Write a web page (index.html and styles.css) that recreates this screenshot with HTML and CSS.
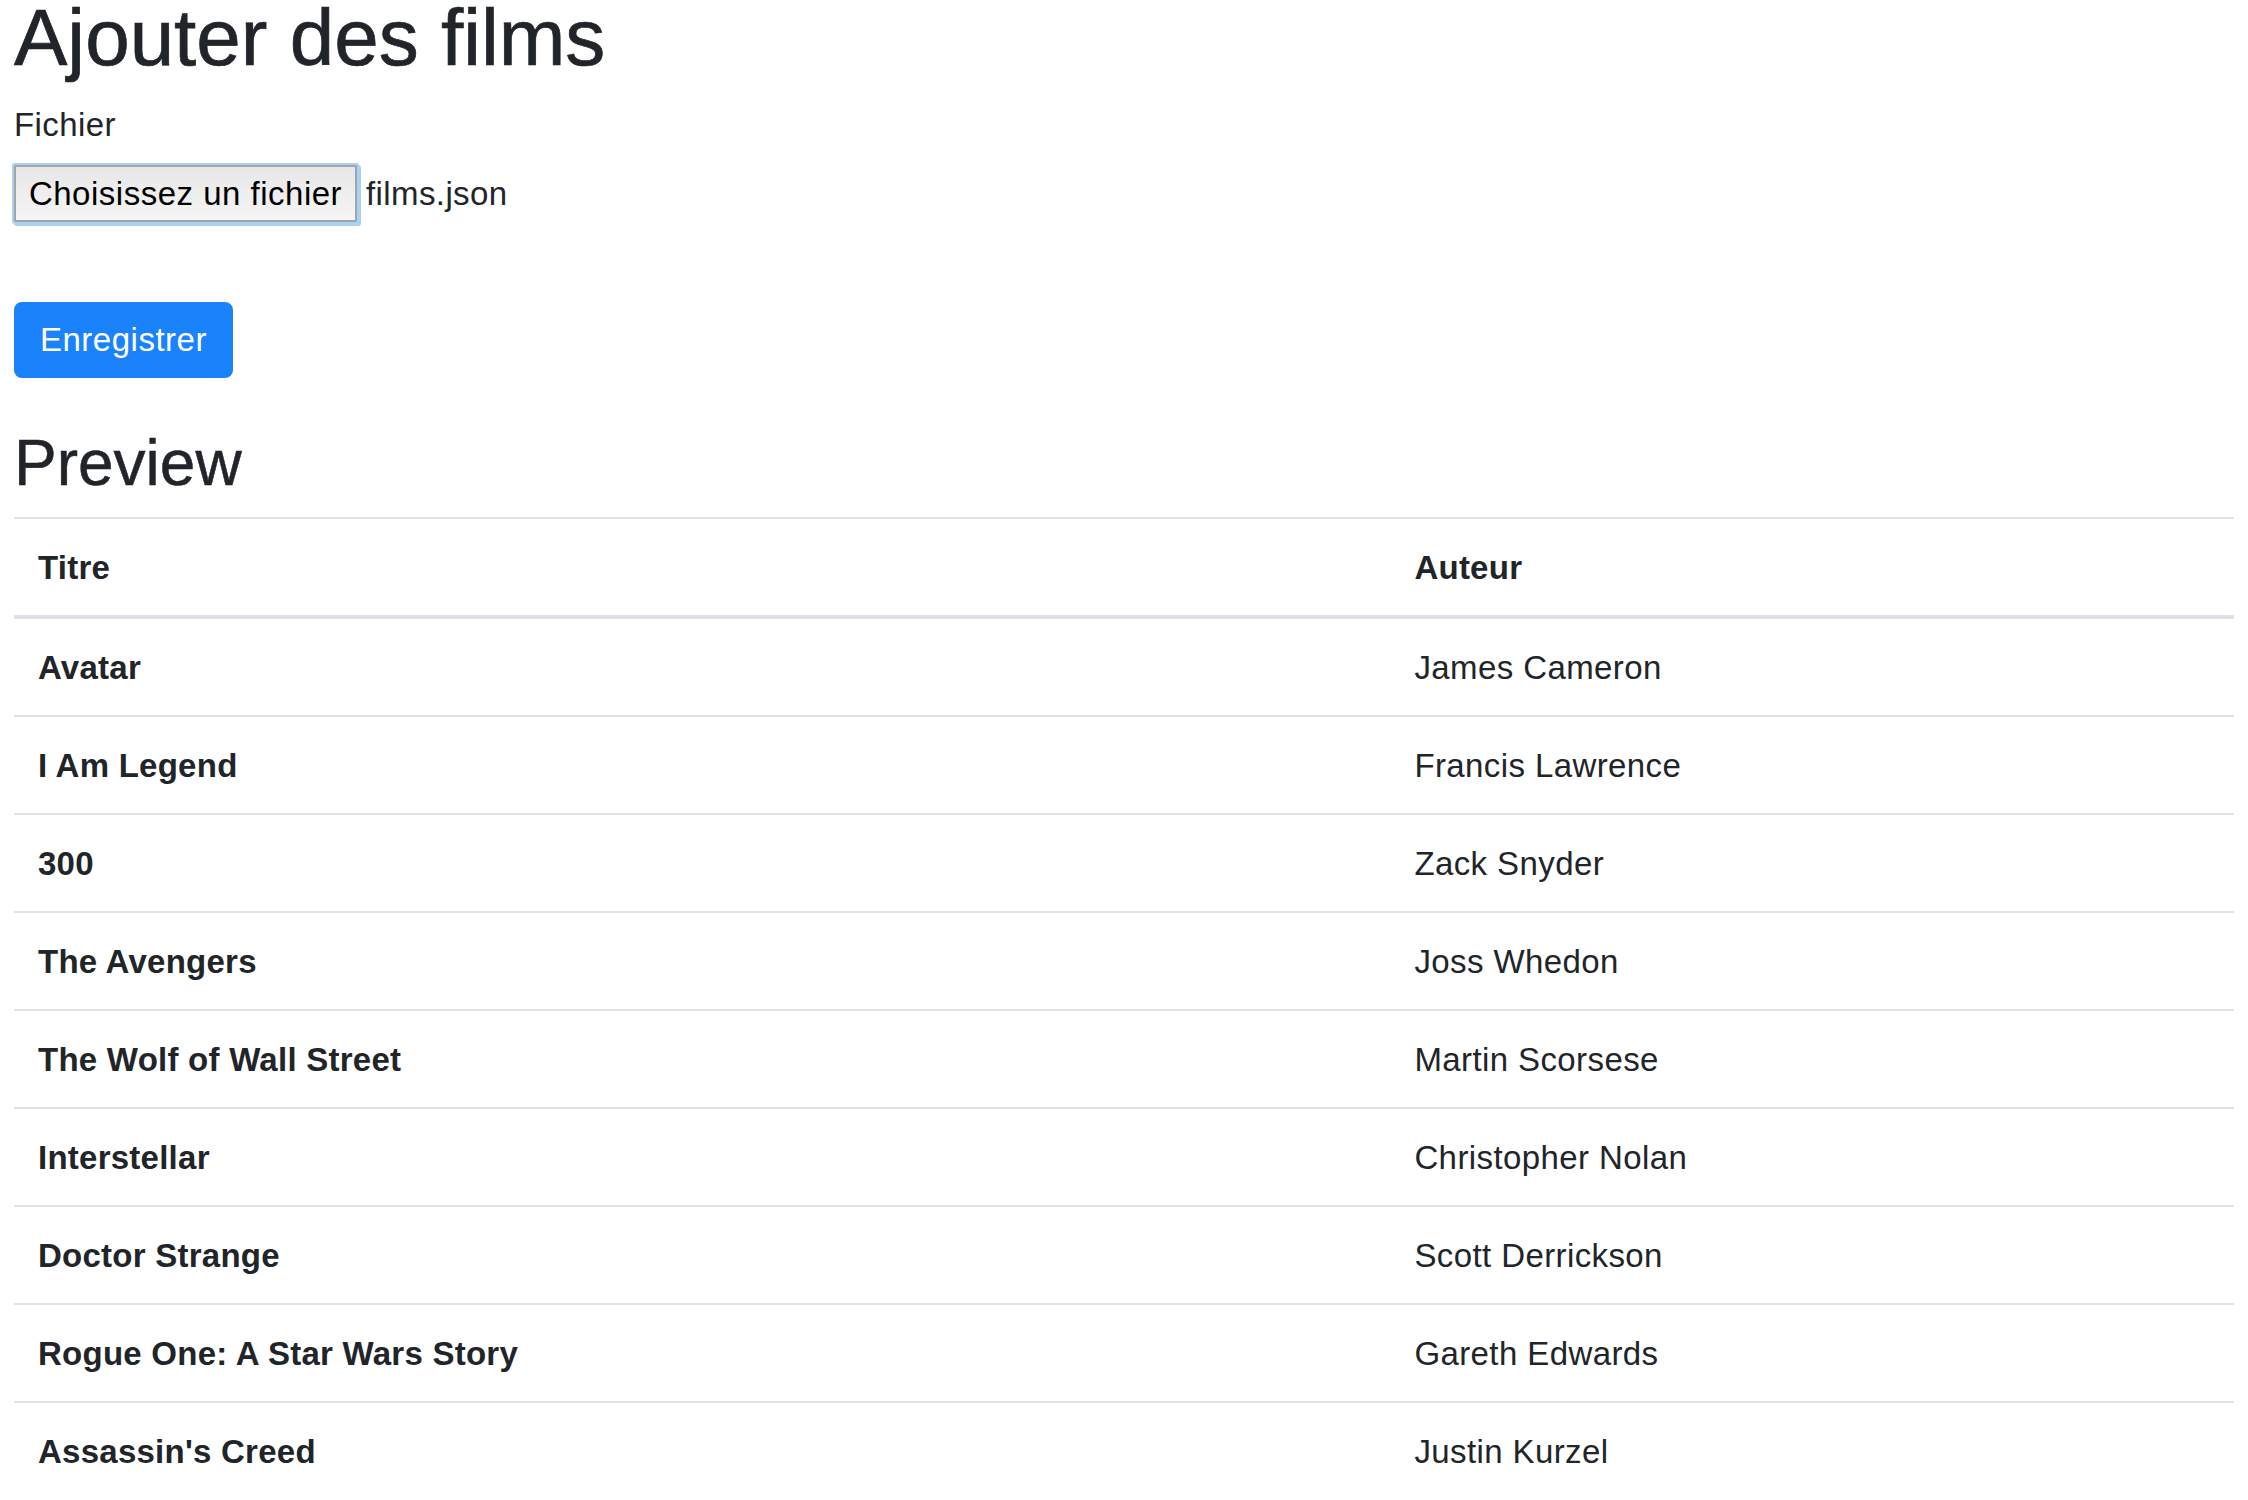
FILE: index.html
```html
<!DOCTYPE html>
<html lang="fr">
<head>
<meta charset="utf-8">
<title>Ajouter des films</title>
<link rel="stylesheet" href="styles.css">
</head>
<body>
<main class="page">
  <h1 class="title">Ajouter des films</h1>
  <form class="upload">
    <label class="field-label" for="file">Fichier</label>
    <div class="file-row">
      <button type="button" id="file" class="file-btn">Choisissez un fichier</button>
      <span class="file-name">films.json</span>
    </div>
    <button type="submit" class="btn-primary">Enregistrer</button>
  </form>
  <h2 class="subtitle">Preview</h2>
  <table class="films">
    <thead>
      <tr><th class="col-title">Titre</th><th>Auteur</th></tr>
    </thead>
    <tbody>
      <tr><th>Avatar</th><td>James Cameron</td></tr>
      <tr><th>I Am Legend</th><td>Francis Lawrence</td></tr>
      <tr><th>300</th><td>Zack Snyder</td></tr>
      <tr><th>The Avengers</th><td>Joss Whedon</td></tr>
      <tr><th>The Wolf of Wall Street</th><td>Martin Scorsese</td></tr>
      <tr><th>Interstellar</th><td>Christopher Nolan</td></tr>
      <tr><th>Doctor Strange</th><td>Scott Derrickson</td></tr>
      <tr><th>Rogue One: A Star Wars Story</th><td>Gareth Edwards</td></tr>
      <tr><th>Assassin's Creed</th><td>Justin Kurzel</td></tr>
    </tbody>
  </table>
</main>
</body>
</html>
```
FILE: styles.css
```css
html, body {
  margin: 0;
  padding: 0;
  background: #ffffff;
}

body {
  font-family: "Liberation Sans", Arial, sans-serif;
  color: #212529;
  font-size: 33px;
  line-height: 48px;
  letter-spacing: 0.4px;
}

.page {
  padding: 0 14px;
}

.title {
  margin: 0;
  font-size: 80px;
  font-weight: 400;
  line-height: 76px;
  letter-spacing: 0;
  color: #212529;
  -webkit-text-stroke: 0.7px #212529;
}

.upload {
  display: flex;
  flex-direction: column;
  align-items: flex-start;
}

.field-label {
  display: block;
  margin-top: 25px;
  font-size: 33px;
  line-height: 48px;
}

.file-row {
  display: flex;
  align-items: center;
  gap: 9px;
  margin-top: 16px;
  height: 57px;
}

.file-btn {
  box-sizing: border-box;
  height: 57px;
  width: 343px;
  padding: 0;
  border: 2px solid #a4a4a4;
  border-radius: 1px;
  background: linear-gradient(#e7e7e7, #f5f5f5);
  box-shadow: 0 0 0 2px #a9d0f5, 2px 2px 0 2px #a9d0f5;
  font-family: "Liberation Sans", Arial, sans-serif;
  font-size: 33px;
  line-height: 40px;
  letter-spacing: 0.5px;
  color: #000000;
  text-align: center;
}

.file-name {
  font-size: 33px;
  line-height: 40px;
  color: #212529;
}

.btn-primary {
  box-sizing: border-box;
  margin-top: 80px;
  height: 76px;
  padding: 12px 24px;
  border: 2px solid #1a82fb;
  border-radius: 8px;
  background: #1a82fb;
  color: #ffffff;
  font-family: "Liberation Sans", Arial, sans-serif;
  font-size: 33px;
  line-height: 48px;
  letter-spacing: 0.5px;
}

.subtitle {
  margin: 47px 0 15px;
  font-size: 64px;
  font-weight: 400;
  line-height: 77px;
  letter-spacing: 0;
  color: #212529;
  -webkit-text-stroke: 0.5px #212529;
}

.films {
  width: 100%;
  border-collapse: separate;
  border-spacing: 0;
}

.films th,
.films td {
  text-align: left;
  vertical-align: top;
  padding: 25px 24px 23px;
  line-height: 48px;
  font-size: 33px;
  border-top: 2px solid #dee2e6;
}

.films th {
  font-weight: 700;
  letter-spacing: 0.25px;
}

.films td {
  font-weight: 400;
}

.films thead th {
  border-bottom: 4px solid #dee2e6;
}

.films tbody tr:first-child th,
.films tbody tr:first-child td {
  border-top: 0;
}

.col-title {
  width: 62%;
}
```
